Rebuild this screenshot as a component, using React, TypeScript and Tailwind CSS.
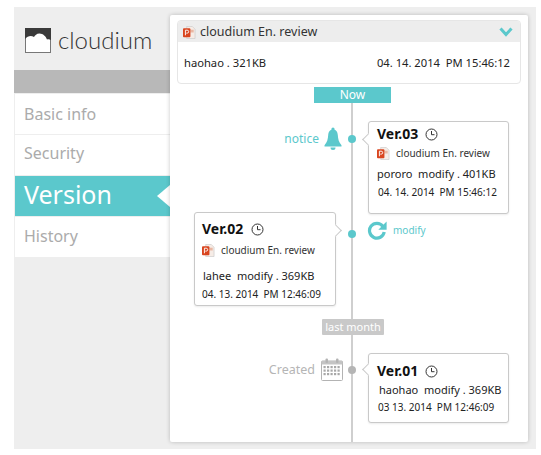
const font = { sans: "font-['Noto_Sans',sans-serif]" };

const PptIcon = ({ size = 14 }: { size?: number }) => (
  <svg width={size} height={size} viewBox="0 0 14 14" className="shrink-0">
    <path d="M4 0.5h6l3 3v10H4z" fill="#f6ece6" stroke="#c9c9c9" strokeWidth="0.7" />
    <rect x="8" y="4" width="3.5" height="3" fill="#e9b7a3" />
    <rect x="0" y="2.5" width="8" height="9.5" rx="1" fill="#d9451f" />
    <path d="M2.6 10V4.5h1.9a1.3 1.3 0 0 1 0 3.2H3.6" fill="none" stroke="#fff" strokeWidth="1" />
  </svg>
);

const Clock = () => (
  <svg width="13" height="13" viewBox="0 0 13 13" fill="none" stroke="#333" strokeWidth="1" className="shrink-0">
    <circle cx="6.5" cy="6.5" r="5.5" />
    <path d="M6.5 3v3.7h3" />
  </svg>
);

const Bell = () => (
  <svg width="20" height="24" viewBox="0 0 20 24" fill="#5bc8cc">
    <circle cx="10" cy="2" r="1.6" />
    <path d="M10 2.5c-3.4 0-4.6 2.6-4.8 5.5-.3 4-.8 7-3.7 10.2v1.3h17v-1.3c-2.9-3.2-3.4-6.2-3.7-10.2C14.600 5.100 13.400 2.500 10 2.500z" />
    <path d="M7.500 20.500h5a2.500 2.500 0 0 1-5 0z" />
  </svg>
);

const Refresh = () => (
  <svg width="20" height="20" viewBox="0 0 20 20" fill="none">
    <path d="M15.800 6.200A7.400 7.400 0 1 0 17.200 12" stroke="#5bc8cc" strokeWidth="3.200" />
    <path d="M19.600 1.500v8.300h-8.300z" fill="#5bc8cc" />
  </svg>
);

const Calendar = () => (
  <svg width="22" height="23" viewBox="0 0 22 23" fill="none">
    <rect x="0.500" y="3" width="21" height="19.500" rx="1" stroke="#b3b3b3" />
    <path d="M0.500 3h21v3.500h-21z" fill="#c4c4c4" />
    <rect x="4.500" y="0.500" width="2.500" height="4.500" rx="1" fill="#b3b3b3" />
    <rect x="15" y="0.500" width="2.500" height="4.500" rx="1" fill="#b3b3b3" />
    {[9, 12.500, 16].map((y) =>
      [3.500, 7, 10.500, 14, 17.500].map((x) => (
        <rect key={`${x}-${y}`} x={x - 1} y={y - 1} width="2.200" height="2.200" fill="#a8a8a8" />
      ))
    )}
  </svg>
);

const Logo = () => (
  <svg width="26" height="25" viewBox="0 0 26 25" className="shrink-0">
    <rect x="0.500" y="0.500" width="25" height="24" fill="#fff" stroke="#777" />
    <path d="M0 0h26v12c-1.500-1-3-1-4-.5C21 8.500 18 5.500 14.500 5.500c-3 0-4.500 2-5.500 3.500C6 7 2.500 8 0 11z" fill="#3a3a3a" />
  </svg>
);

const Dot = ({ top, gray }: { top: number; gray?: boolean }) => (
  <span
    className={`absolute left-[178px] h-[8px] w-[8px] rounded-full ${gray ? "bg-[#b5b5b5]" : "bg-[#5bc8cc]"}`}
    style={{ top }}
  />
);

const Card = ({
  side,
  tail,
  className,
  children,
}: {
  side: "left" | "right";
  tail: number;
  className: string;
  children: React.ReactNode;
}) => (
  <div className={`relative rounded-[3px] border border-[#c9c9c9] bg-white shadow-[0_1px_2px_rgba(0,0,0,0.08)] ${className}`}>
    <span
      className={`absolute h-[9px] w-[9px] rotate-45 bg-white ${
        side === "right"
          ? "left-[-5px] border-b border-l border-[#c9c9c9]"
          : "right-[-5px] border-t border-r border-[#c9c9c9]"
      }`}
      style={{ top: tail }}
    />
    {children}
  </div>
);

const Title = ({ v, gap }: { v: string; gap: string }) => (
  <div className={`flex items-center ${gap}`}>
    <span className="text-[14px] leading-[18px] font-bold text-[#111]">{v}</span>
    <Clock />
  </div>
);

const NavItem = ({ label, className }: { label: string; className?: string }) => (
  <div className={`flex h-[40px] items-center bg-white pl-[9px] text-[16px] text-[#ababab] ${className ?? ""}`}>{label}</div>
);

export default function App() {
  return (
    <div className={`h-[455px] w-[541px] bg-white pt-[7px] pl-[14px] ${font.sans}`}>
      <div className="flex h-[442px] w-[522px] bg-[#eeeeee] pt-[8px]">
        {/* sidebar */}
        <aside className="w-[156px] shrink-0">
          <div className="flex h-[55px] items-center gap-[7px] pb-[5px] pl-[11px]">
            <Logo />
            <span className="font-['Lato',sans-serif] text-[24px] leading-none font-light text-[#333]">cloudium</span>
          </div>
          <div className="h-[23px] bg-[#b8b8b8]" />
          <div className="ml-px">
            <NavItem label="Basic info" className="mt-px" />
            <NavItem label="Security" className="mt-px pb-[4px]" />
            <div className="relative mt-px flex h-[40px] items-center bg-[#5bc8cc] pb-[2px] pl-[9px] text-[25px] text-white">
              Version
              <span className="absolute right-0 top-[9px] h-0 w-0 border-y-[11px] border-r-[13px] border-y-transparent border-r-white" />
            </div>
            <NavItem label="History" className="mt-px pb-[2px]" />
          </div>
        </aside>

        {/* panel */}
        <main className="relative h-[427px] w-[358px] shrink-0 rounded-[2px] bg-white px-[7px] pt-[5px] shadow-[0_0_4px_rgba(0,0,0,0.22)]">
          <span className="absolute top-[88px] bottom-0 left-[181px] w-[2px] bg-[#cfcfcf]" />

          <section className="overflow-hidden rounded-[4px] border border-[#e6e6e6]">
            <header className="flex h-[21px] items-center justify-between bg-[#ededed] pt-px pr-[7px] pl-[5px]">
              <div className="flex items-center gap-[4px] text-[12.500px] text-[#333]">
                <PptIcon size={13} />
                cloudium En. review
              </div>
              <svg width="14" height="10" viewBox="0 0 14 10" fill="none" stroke="#5bc8cc" strokeWidth="3">
                <path d="M1.500 1.500L7 7.500l5.500-6" />
              </svg>
            </header>
            <div className="flex h-[41px] items-center justify-between pt-[2px] pr-[10px] pl-[6px] text-[11.200px] text-[#222]">
              <span>haohao . 321KB</span>
              <span>04. 14. 2014&nbsp; PM 15:46:12</span>
            </div>
          </section>

          <div className="relative mt-[3px] ml-[137px] flex h-[16px] w-[77px] items-center justify-center bg-[#5bc8cc] text-[12px] text-white">
            Now
          </div>

          <div className="relative -mx-[7px]">
            <Dot top={32} />
            <Dot top={127} />
            <div className="flex pt-[18px]">
              <div className="flex w-[182px] items-start justify-end gap-[4px] pt-[6px] pr-[9px]">
                <span className="text-[12px] leading-[24px] text-[#5bc8cc]">notice</span>
                <Bell />
              </div>
              <div className="pl-[16px]">
                <Card side="right" tail={13} className="h-[93px] w-[141px] pt-[3px] pl-[8px]">
                  <Title v="Ver.03" gap="gap-[7px]" />
                  <div className="mt-[3px] flex items-center gap-[6px] text-[10px] leading-[14px] text-[#333]">
                    <PptIcon size={13} />
                    cloudium En. review
                  </div>
                  <p className="mt-[7px] text-[11px] leading-[14px] text-[#222]">pororo&nbsp; modify . 401KB</p>
                  <p className="mt-[4px] pl-px text-[10px] leading-[14px] text-[#222]">04. 14. 2014&nbsp; PM 15:46:12</p>
                </Card>
              </div>
            </div>

            <div className="-mt-[2px] flex">
              <div className="w-[182px] pl-[24px]">
                <Card side="left" tail={13} className="h-[94px] w-[142px] pt-[7px] pl-[7px]">
                  <Title v="Ver.02" gap="gap-[8px]" />
                  <div className="mt-[5px] flex items-center gap-[6px] text-[10px] leading-[14px] text-[#333]">
                    <PptIcon size={13} />
                    cloudium En. review
                  </div>
                  <p className="mt-[12px] pl-px text-[11px] leading-[14px] text-[#222]">lahee&nbsp; modify . 369KB</p>
                  <p className="mt-[4px] text-[10px] leading-[14px] text-[#222]">04. 13. 2014&nbsp; PM 12:46:09</p>
                </Card>
              </div>
              <div className="flex items-start gap-[6px] pt-[8px] pl-[15px]">
                <Refresh />
                <span className="text-[10px] leading-[20px] text-[#5bc8cc]">modify</span>
              </div>
            </div>

            <div className="relative mt-[13px] ml-[152px] flex h-[16px] w-[62px] items-center justify-center rounded-[1px] bg-[#c9c9c9] text-[11px] text-white">
              last month
            </div>

            <Dot top={263} gray />
            <div className="flex pt-[18px]">
              <div className="flex w-[182px] items-start justify-end gap-[6px] pt-[5px] pr-[9px]">
                <span className="text-[12.500px] leading-[24px] text-[#b5b5b5]">Created</span>
                <Calendar />
              </div>
              <div className="pl-[16px]">
                <Card side="right" tail={11} className="h-[70px] w-[141px] pt-[8px] pl-[8px]">
                  <Title v="Ver.01" gap="gap-[7px]" />
                  <p className="mt-[3px] pl-[2px] text-[11px] leading-[14px] text-[#222]">haohao&nbsp; modify . 369KB</p>
                  <p className="mt-[3px] pl-px text-[10px] leading-[14px] text-[#222]">03 13. 2014&nbsp; PM 12:46:09</p>
                </Card>
              </div>
            </div>
          </div>
        </main>
      </div>
    </div>
  );
}
